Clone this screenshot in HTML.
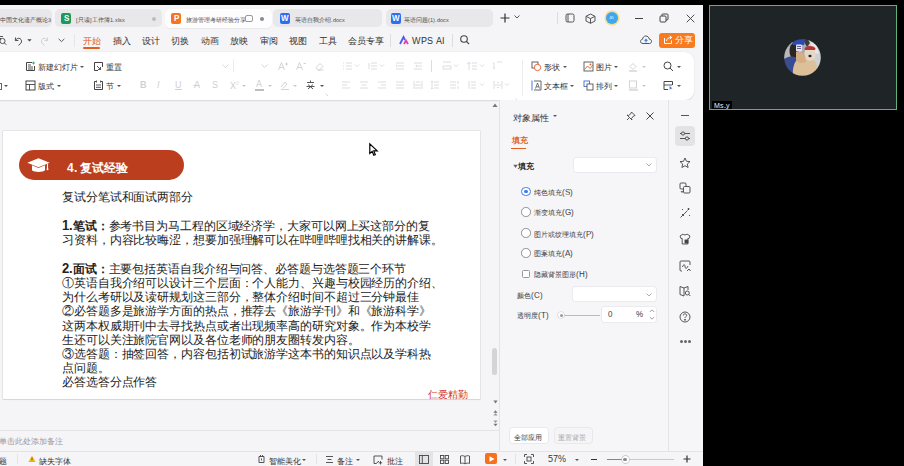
<!DOCTYPE html>
<html><head><meta charset="utf-8">
<style>
@font-face{font-family:"Liberation Sans";src:local("Liberation Sans"),local("LiberationSans");unicode-range:U+0000-1FFF;}
@font-face{font-family:"Liberation Sans";src:local("Liberation Sans"),local("LiberationSans");size-adjust:133%;unicode-range:U+2000-FFFF;}
@font-face{font-family:"Liberation Sans";font-weight:bold;src:local("Liberation Sans Bold"),local("LiberationSans-Bold");unicode-range:U+0000-1FFF;}
@font-face{font-family:"Liberation Sans";font-style:italic;src:local("Liberation Sans Italic"),local("LiberationSans-Italic");unicode-range:U+0000-1FFF;}
@font-face{font-family:"Liberation Sans";font-weight:bold;src:local("Liberation Sans Bold"),local("LiberationSans-Bold");size-adjust:133%;unicode-range:U+2000-FFFF;}
html,body{margin:0;padding:0}
body{width:904px;height:466px;background:#000;position:relative;overflow:hidden;font-family:"Liberation Sans",sans-serif;color:#333}
.a{position:absolute}
.app{left:0;top:5px;width:703px;height:461px;background:#f5f4f7;overflow:hidden}
.t{white-space:nowrap;line-height:1}
svg{position:absolute;overflow:visible}
.tab{position:absolute;top:3.7px;height:18.8px;background:#e8e7ea;border-radius:5px}
.tab .ic{position:absolute;left:6px;top:4px;width:10px;height:11px;border-radius:2px;color:#fff;font:bold 8px/11px "Liberation Sans";text-align:center}
.tab .tx{position:absolute;left:21px;top:8px;font-size:5.5px;color:#4a4a4e;white-space:nowrap;line-height:7px}
.rb{position:absolute;font-size:7.6px;color:#333;white-space:nowrap;line-height:9px}
.car{position:absolute;width:0;height:0;border-left:2px solid transparent;border-right:2px solid transparent;border-top:2.2px solid #555}
.carl{border-top-color:#c9c9cc}
.pn{position:absolute;font-size:7.4px;color:#3c3c3c;white-space:nowrap;line-height:9px}
.rad{position:absolute;width:9.5px;height:9.5px;margin:-0.75px 0 0 -0.75px;border:0.9px solid #8e8e92;border-radius:50%;background:#fff;box-sizing:border-box}
.sb{position:absolute;font-size:8px;color:#333;white-space:nowrap;line-height:9px}
.L{font-size:1.1em}
.menu{position:absolute;top:31px;font-size:8.6px;color:#333;white-space:nowrap;line-height:10px}
</style></head><body>
<div class="a app">
  <!-- tabs row -->
  <div class="a" style="left:0;top:0;width:703px;height:47px;background:#f5f4f7"></div>
  <div class="tab" style="left:-10px;width:62px"><div class="tx" style="left:10px">中国文化遗产概论3</div></div>
  <div class="tab" style="left:55px;width:107px"><div class="ic" style="background:#1c9a5b">S</div><div class="tx">[只读]工作簿1.xlsx</div><div class="a" style="left:97px;top:8px;width:4px;height:4px;border-radius:2px;background:#bdbdc0"></div></div>
  <div class="tab" style="left:165px;width:107px;background:#fdfdfe;height:19.5px;box-shadow:0 0.5px 1px rgba(0,0,0,.05)"><div class="ic" style="background:#f5761f">P</div><div class="tx">旅游管理考研经验分享...</div>
    <div class="a" style="left:80px;top:6px;width:6px;height:5px;border:0.8px solid #999;border-radius:2px"></div>
    <div class="a" style="left:95px;top:8px;width:4px;height:4px;border-radius:2px;background:#8a8a8e"></div></div>
  <div class="tab" style="left:273px;width:109px"><div class="ic" style="background:#2d6ff2;left:7px">W</div><div class="tx" style="left:22px">英语自我介绍.docx</div></div>
  <div class="tab" style="left:386px;width:107px"><div class="ic" style="background:#2d6ff2;left:5px">W</div><div class="tx" style="left:18px">英语问题(1).docx</div></div>
  <svg style="left:499.5px;top:8px" width="10" height="10"><path d="M5 0.5V9.5M0.5 5H9.5" stroke="#333" stroke-width="1.2"/></svg>
  <svg style="left:514px;top:10px" width="6" height="4"><path d="M0.5 0.5L3 3L5.5 0.5" fill="none" stroke="#555" stroke-width="1"/></svg>
  <!-- toolbar row -->
  

  <!-- toolbar row content -->
  <svg style="left:-2px;top:30px" width="10" height="11" fill="none" stroke="#444" stroke-width="0.9"><path d="M0 1.5H5M0 3.5H3"/><circle cx="4.5" cy="6" r="2.6"/><path d="M6.4 7.9L8.3 9.8"/></svg>
  <svg style="left:14px;top:30.5px" width="9" height="10" fill="none" stroke="#444" stroke-width="0.95"><path d="M1.5 1.5L1.3 4.6L4.4 4.4"/><path d="M1.5 4.3C2.6 2.4 4.5 1.8 6 2.6C7.8 3.6 8 5.8 6.8 7.3L4.5 9.4"/></svg>
  <svg style="left:26.5px;top:34.3px" width="5" height="3"><path d="M0.3 0.3H4.7L2.5 2.6Z" fill="#444"/></svg>
  <svg style="left:40px;top:30.5px" width="9" height="10" fill="none" stroke="#cfcfd2" stroke-width="0.95"><path d="M7.5 1.5L7.7 4.6L4.6 4.4"/><path d="M7.5 4.3C6.4 2.4 4.5 1.8 3 2.6C1.2 3.6 1 5.8 2.2 7.3L4.5 9.4"/></svg>
  <svg style="left:57.5px;top:33px" width="7" height="5"><path d="M0.6 0.8L3.5 3.6L6.4 0.8" fill="none" stroke="#555" stroke-width="0.95"/></svg>
  <div class="a" style="left:74px;top:29px;width:1px;height:13px;background:#e6e6e9"></div>
  <div class="menu" style="left:83px;color:#e0601c">开始</div>
  <div class="a" style="left:83px;top:42px;width:17px;height:2px;background:#e0601c;border-radius:1px"></div>
  <div class="menu" style="left:112.5px">插入</div>
  <div class="menu" style="left:142px">设计</div>
  <div class="menu" style="left:171px">切换</div>
  <div class="menu" style="left:200.5px">动画</div>
  <div class="menu" style="left:230px">放映</div>
  <div class="menu" style="left:259.5px">审阅</div>
  <div class="menu" style="left:289px">视图</div>
  <div class="menu" style="left:318.5px">工具</div>
  <div class="menu" style="left:348px">会员专享</div>
  <div class="a" style="left:390px;top:29px;width:1px;height:13px;background:#dddde0"></div>
  <svg style="left:399px;top:31px" width="10" height="9"><path d="M1 8L4.5 1L6 4" fill="none" stroke="#4a5cf0" stroke-width="1.8"/><path d="M5 8L7 4.5L9 8" fill="none" stroke="#e8409a" stroke-width="1.8"/></svg>
  <div class="a t" style="left:412px;top:31.5px;font-size:9px;color:#333">WPS AI</div>
  <div class="a" style="left:452px;top:29px;width:1px;height:13px;background:#dddde0"></div>
  <svg style="left:460px;top:30px" width="10" height="10"><circle cx="4" cy="4" r="3.3" fill="none" stroke="#444" stroke-width="1.1"/><path d="M6.4 6.4L9 9" stroke="#444" stroke-width="1.1"/></svg>
  <!-- right window controls -->
  <div class="a" style="left:557px;top:7px;width:1px;height:12px;background:#dddde0"></div>
  <svg style="left:565px;top:8px" width="10" height="10"><rect x="1" y="1" width="8" height="8" rx="1.5" fill="none" stroke="#555" stroke-width="1"/><path d="M3 1v8" stroke="#555" stroke-width="1"/></svg>
  <svg style="left:585px;top:8px" width="11" height="11"><path d="M5.5 1L10 3.3V8L5.5 10.3L1 8V3.3Z M1 3.3L5.5 5.6L10 3.3 M5.5 5.6V10.3" fill="none" stroke="#555" stroke-width="1"/></svg>
  <div class="a" style="left:606px;top:7px;width:12px;height:12px;border-radius:7px;background:#3ea7f0;box-shadow:0 0 0 1.5px #f6dc8c"><div class="a t" style="left:2.5px;top:3.5px;font-size:4.5px;color:#fff">Jn</div></div>
  <div class="a" style="left:635px;top:12.5px;width:8px;height:1.2px;background:#444"></div>
  <svg style="left:659px;top:8px" width="10" height="10"><rect x="1" y="3" width="6" height="6" rx="1" fill="none" stroke="#444" stroke-width="1"/><path d="M3 3V1.5C3 1 3.3 1 3.8 1H8C8.5 1 9 1.3 9 1.8V6C9 6.6 8.7 7 8 7H7" fill="none" stroke="#444" stroke-width="1"/></svg>
  <svg style="left:685.5px;top:8.5px" width="9" height="9"><path d="M0.7 0.7L8.3 8.3M8.3 0.7L0.7 8.3" stroke="#444" stroke-width="0.95"/></svg>
  <svg style="left:640px;top:30px" width="12" height="10"><path d="M3 8.5H9.5C11 8.5 11.5 7.3 11.5 6.3C11.5 5 10.5 4.2 9.3 4.2C9 2.3 7.6 1 5.8 1C4 1 2.7 2.4 2.6 4.2C1.3 4.4 0.5 5.3 0.5 6.4C0.5 7.6 1.5 8.5 3 8.5Z" fill="none" stroke="#555" stroke-width="1"/><path d="M6 7.5V4.5M4.6 5.8L6 4.4L7.4 5.8" fill="none" stroke="#3b82f6" stroke-width="1.1"/></svg>
  <div class="a" style="left:659px;top:27.5px;width:36px;height:15px;background:#fa7a1e;border-radius:3px"></div>
  <svg style="left:663px;top:30px" width="10" height="10"><path d="M8.5 5.5V8.5H1.5V3" fill="none" stroke="#fff" stroke-width="1"/><path d="M3.5 6C3.8 3.5 5.5 2.5 8.5 2.5M6.8 0.8L8.7 2.5L6.8 4.2" fill="none" stroke="#fff" stroke-width="1"/></svg>
  <div class="a t" style="left:675px;top:30px;font-size:8.5px;color:#fff;line-height:10px">分享</div>

  <!-- ribbon -->
  <div class="a" style="left:-12px;top:47px;width:706px;height:48px;background:#fff;border-radius:0 9px 9px 0;box-shadow:0 0.5px 1.5px rgba(0,0,0,.12)"></div>
  <div class="a" style="left:-3px;top:77.5px;width:5px;height:7px;border:1px solid #666;border-left:none;box-sizing:border-box"></div><div class="car" style="left:4px;top:80px"></div>
  <!-- 新建幻灯片 -->
  <svg style="left:25px;top:56px" width="11" height="11"><path d="M7 1.5H1.5V9.5H9.5V5" fill="none" stroke="#444" stroke-width="1"/><path d="M3 4h3M3 6h5M3 8h5" stroke="#444" stroke-width="0.9"/><path d="M8.5 0.5v3M7 2h3" stroke="#2aa865" stroke-width="0.9"/></svg>
  <div class="rb" style="left:38px;top:58.3px">新建幻灯片</div>
  <div class="car" style="left:80px;top:61px"></div>
  <svg style="left:92.5px;top:56px" width="11" height="11"><path d="M9.5 6V1.5H1.5V9.5H5" fill="none" stroke="#444" stroke-width="1"/><path d="M4 5L7.5 8.5M7.5 8.5V6M7.5 8.5H5" fill="none" stroke="#444" stroke-width="0.9"/></svg>
  <div class="rb" style="left:105.5px;top:58.3px">重置</div>
  <svg style="left:25px;top:75px" width="11" height="11"><rect x="1" y="1" width="9" height="9" fill="none" stroke="#444" stroke-width="1"/><path d="M1 4.5h9M4.5 4.5v5.5" stroke="#444" stroke-width="0.9"/></svg>
  <div class="rb" style="left:38px;top:77px">版式</div>
  <div class="car" style="left:57px;top:80px"></div>
  <svg style="left:93px;top:75px" width="11" height="11"><path d="M3 1.5H1.5V9.5H9.5V1.5H8" fill="none" stroke="#444" stroke-width="1"/><path d="M3.5 0.5v2M7.5 0.5v2M3 5h5M3 7.3h5" stroke="#444" stroke-width="0.9"/></svg>
  <div class="rb" style="left:105.5px;top:77px">节</div>
  <div class="car" style="left:117px;top:80px"></div>
  <!-- disabled font group -->
  <svg style="left:222px;top:59px" width="7" height="5"><path d="M0.5 0.5L3.5 3.5L6.5 0.5" fill="none" stroke="#d3d3d6" stroke-width="0.9"/></svg>
  <div class="a" style="left:232.5px;top:54px;width:1px;height:13px;background:#ececee"></div>
  <svg style="left:261px;top:59px" width="7" height="5"><path d="M0.5 0.5L3.5 3.5L6.5 0.5" fill="none" stroke="#d3d3d6" stroke-width="0.9"/></svg>
  <svg style="left:278px;top:56px" width="11" height="10"><path d="M0.5 9L3.5 1.5L6.5 9M1.7 6.5H5.3M7 3h3M8.5 1.5v3" fill="none" stroke="#cfcfd2" stroke-width="0.9"/></svg>
  <svg style="left:296px;top:56px" width="11" height="10"><path d="M0.5 9L3.5 1.5L6.5 9M1.7 6.5H5.3M7.5 2.5h2.5" fill="none" stroke="#cfcfd2" stroke-width="0.9"/></svg>
  <svg style="left:314px;top:56px" width="11" height="11"><path d="M4 9H9.5M2 6.5L6 2.5L9 5.5L5.5 9H4Z" fill="none" stroke="#cfcfd2" stroke-width="0.9"/></svg>
  <!-- row2 font -->
  <div class="a t" style="left:140px;top:76px;font-size:9px;color:#cfcfd2;font-weight:bold">B</div>
  <div class="a t" style="left:157px;top:76px;font-size:9px;color:#cfcfd2;font-style:italic">I</div>
  <div class="a t" style="left:175px;top:76px;font-size:9px;color:#cfcfd2;text-decoration:underline">U</div>
  <div class="a t" style="left:193.5px;top:76px;font-size:9px;color:#cfcfd2;text-decoration:line-through">A</div>
  <div class="a t" style="left:211.5px;top:76px;font-size:9px;color:#cfcfd2">S</div>
  <div class="a t" style="left:229.5px;top:76px;font-size:9px;color:#cfcfd2">X<sup style="font-size:5px">2</sup></div>
  <div class="car carl" style="left:242px;top:80px"></div>
  <div class="a t" style="left:256px;top:75px;font-size:8.5px;color:#cfcfd2">A</div>
  <div class="a" style="left:255px;top:84px;width:9px;height:1.5px;background:#bdbdc0"></div>
  <div class="car carl" style="left:267.5px;top:80px"></div>
  <svg style="left:280px;top:75px" width="10" height="10"><path d="M1 7L5 2L7 4L3 8.5M1 9.5h8" fill="none" stroke="#cfcfd2" stroke-width="0.9"/></svg>
  <div class="car carl" style="left:293px;top:80px"></div>
  <svg style="left:305px;top:75px" width="11" height="11"><path d="M5.5 0.5v2M2 2.5h7M3 4.5L8 9M8 4.5L3 9M1.5 6.5h8" fill="none" stroke="#444" stroke-width="0.9"/></svg>
  <div class="car" style="left:319.5px;top:80px"></div>
  <svg style="left:325px;top:88px" width="4" height="4"><path d="M0.5 0.5L3 3" stroke="#ccc" stroke-width="0.8"/></svg>
  <!-- paragraph group (disabled) -->
  <svg style="left:342px;top:57.3px" width="200" height="30" fill="none" stroke="#d9d9dc" stroke-width="0.9">
    <path d="M1 1h1M4 1h6M1 4h1M4 4h6M1 7h1M4 7h6"/><path d="M13 2.5l2 2l2-2"/>
    <path d="M27 1v6M29 1h6M29 4h6M29 7h6"/><path d="M38 2.5l2 2l2-2"/>
    <path d="M54 1h8M56 4h6M54 7h8M54 3l1.3 1L54 5"/>
    <path d="M72 1h8M74 4h6M72 7h8M75 3l-1.3 1L75 5"/>
    <path d="M89.5 -2v12"/>
    <path d="M101 0h8M101 4h8M101 7h8M101 4v3M109 4v3"/><path d="M112 2.5l2 2l2-2"/>
    <path d="M127 0v8M125 2l2-2l2 2M130 1h5M130 4h5M130 7h5"/><path d="M138 2.5l2 2l2-2"/>
    <path d="M152 1v6M152 1h-1M155 0h5M153 7l-1.5-1.5"/>
  </svg>
  <svg style="left:342px;top:76px" width="200" height="12" fill="none" stroke="#d9d9dc" stroke-width="0.9">
    <path d="M0 1h8M0 4h5M0 7h8"/>
    <path d="M18 1h8M19.5 4h5M18 7h8"/>
    <path d="M36 1h8M39 4h5M36 7h8"/>
    <path d="M54 1h8M54 4h8M54 7h8"/>
    <path d="M72 0v8M80 0v8M73 4h6M73 7h6M74 1h4"/>
    <path d="M90 0v8M89 1l1-1l1 1M89 7l1 1l1-1M92 1h5M92 4h5M92 7h5"/>
    <path d="M108 1h6M108 4h6M108 7h6M116 0v3M116 5v3"/>
    <path d="M127 0v8M129 1h5M129 4h5M129 7h5"/><path d="M138 2.5l2 2l2-2"/>
    <path d="M152 0v8M160 0v8M153 4h6M155 2l1-1l1 1M155 6l1 1l1-1"/><path d="M163 2.5l2 2l2-2"/>
  </svg>
  <svg style="left:515px;top:93px" width="4" height="4"><path d="M0.5 0.5L3 3" stroke="#ccc" stroke-width="0.8"/></svg>
  <div class="a" style="left:522px;top:55px;width:1px;height:36px;background:#ececee"></div>
  <!-- right drawing group -->
  <svg style="left:531px;top:56px" width="11" height="11"><rect x="1" y="1" width="6" height="6" fill="none" stroke="#555" stroke-width="0.9"/><circle cx="6.5" cy="6.5" r="3.2" fill="#fff" stroke="#e05a2a" stroke-width="0.9"/></svg>
  <div class="rb" style="left:544px;top:58.3px">形状</div>
  <div class="car" style="left:562.5px;top:61px"></div>
  <svg style="left:583px;top:56px" width="11" height="11"><rect x="1" y="1" width="9" height="9" fill="none" stroke="#555" stroke-width="0.9"/><path d="M1.5 8.5L4.5 5L7 7.5L10 4" fill="none" stroke="#e05a2a" stroke-width="0.9"/><circle cx="7.5" cy="3.5" r="0.9" fill="#e05a2a"/></svg>
  <div class="rb" style="left:596px;top:58.3px">图片</div>
  <div class="car" style="left:614px;top:61px"></div>
  <svg style="left:628px;top:56px" width="11" height="11"><path d="M2 5.5L5 2.5L8 5.5L5 8.5Z" fill="none" stroke="#cfcfd2" stroke-width="0.9"/><path d="M1 10h8" stroke="#cfcfd2" stroke-width="1.3"/></svg>
  <div class="car carl" style="left:641.5px;top:61px"></div>
  <svg style="left:663px;top:56px" width="11" height="11"><circle cx="4.5" cy="4.5" r="3.5" fill="none" stroke="#444" stroke-width="1"/><path d="M7 7L10 10" stroke="#444" stroke-width="1"/></svg>
  <div class="car" style="left:677px;top:61px"></div>
  <svg style="left:531px;top:75px" width="11" height="11"><path d="M1 0.5v10" stroke="#3d6bd8" stroke-width="0.9"/><path d="M3 1H10V10H3" fill="none" stroke="#555" stroke-width="0.9"/><path d="M4.5 8.5L6.5 3L8.5 8.5M5.2 6.8h2.6" fill="none" stroke="#555" stroke-width="0.8"/></svg>
  <div class="rb" style="left:544px;top:77px">文本框</div>
  <div class="car" style="left:570px;top:80px"></div>
  <svg style="left:583px;top:75px" width="11" height="11"><rect x="1" y="1" width="5.5" height="5.5" fill="none" stroke="#3d6bd8" stroke-width="0.9"/><rect x="4" y="4" width="6" height="6" fill="#fff" stroke="#555" stroke-width="0.9"/></svg>
  <div class="rb" style="left:596px;top:77px">排列</div>
  <div class="car" style="left:614px;top:80px"></div>
  <svg style="left:628px;top:75px" width="11" height="11"><rect x="1.5" y="1" width="7" height="7" fill="none" stroke="#cfcfd2" stroke-width="0.9"/><path d="M1 10h9" stroke="#cfcfd2" stroke-width="1.3"/></svg>
  <div class="car carl" style="left:641.5px;top:80px"></div>
  <svg style="left:663px;top:75px" width="11" height="11"><path d="M5 9.5H1V1.5H9.5V5" fill="none" stroke="#444" stroke-width="1"/><path d="M1 5h8" stroke="#444" stroke-width="0.9"/><path d="M6.5 6L9.5 8.5L7.5 8.8L6.8 10.5Z" fill="#3d6bd8"/></svg>
  <div class="car" style="left:677px;top:80px"></div>

  <!-- main area -->
  <div class="a" style="left:3px;top:126px;width:477px;height:268px;background:#fff;box-shadow:0 0 0 0.5px rgba(0,0,0,.12),0 1px 1px rgba(0,0,0,.06)"></div>
  <div class="a" style="left:18.5px;top:145.3px;width:165.5px;height:30px;background:#bb3f1f;border-radius:15px"></div>
  <svg style="left:27px;top:152.5px" width="23" height="16"><path d="M11.5 0.3L22.7 4.8L11.5 9.3L0.3 4.8Z" fill="#fff"/><path d="M5 7.3V12.3C7 14.6 16 14.6 18 12.3V7.3L11.5 10Z" fill="#fff"/><path d="M20.5 5.8V11" stroke="#fff" stroke-width="1.1"/><circle cx="20.5" cy="11.3" r="1" fill="#fff"/></svg>
  <div class="a t" style="left:66.5px;top:156.5px;font-size:12px;color:#fff;font-weight:bold;font-family:'Liberation Sans',sans-serif">4. 复试经验</div>
  <div class="a" style="left:62px;top:185.4px;font-size:11.8px;letter-spacing:-0.1px;line-height:14.23px;color:#222;white-space:nowrap;font-family:'Liberation Sans',sans-serif">
复试分笔试和面试两部分<br><br>
<b style="font-family:'Liberation Sans',sans-serif"><span style="font-size:1.12em">1.</span>笔试：</b>参考书目为马工程的区域经济学，大家可以网上买这部分的复<br>
习资料，内容比较晦涩，想要加强理解可以在哔哩哔哩找相关的讲解课。<br><br>
<b style="font-family:'Liberation Sans',sans-serif"><span style="font-size:1.12em">2.</span>面试：</b>主要包括英语自我介绍与问答、必答题与选答题三个环节<br>
①英语自我介绍可以设计三个层面：个人能力、兴趣与校园经历的介绍、<br>
为什么考研以及读研规划这三部分，整体介绍时间不超过三分钟最佳<br>
②必答题多是旅游学方面的热点，推荐去《旅游学刊》和《旅游科学》<br>
这两本权威期刊中去寻找热点或者出现频率高的研究对象。作为本校学<br>
生还可以关注旅院官网以及各位老师的朋友圈转发内容。<br>
③选答题：抽签回答，内容包括初试旅游学这本书的知识点以及学科热<br>
点问题。<br>
必答选答分点作答</div>
  <div class="a t" style="left:427.5px;top:384.9px;font-size:9.8px;color:#c8342a">仁爱精勤</div>
  <!-- scrollbar -->
  <svg style="left:492px;top:98px" width="6" height="5"><path d="M3 0.5L5.5 4H0.5Z" fill="#777"/></svg>
  <div class="a" style="left:492px;top:343px;width:4.5px;height:27px;background:#d4d4d7;border-radius:2.5px"></div>
  <svg style="left:492.5px;top:395px" width="5" height="4"><path d="M2.5 3.5L4.6 0.5H0.4Z" fill="#777"/></svg>
  <svg style="left:492.5px;top:404.5px" width="5" height="7"><path d="M2.5 0.3L4.6 2.8H0.4Z" fill="#777"/><path d="M2.5 3L4.6 5.5H0.4Z" fill="#999"/></svg>
  <svg style="left:492.5px;top:414.5px" width="5" height="7"><path d="M2.5 3L4.6 0.5H0.4Z" fill="#999"/><path d="M2.5 6.2L4.6 3.7H0.4Z" fill="#777"/></svg>
  <!-- notes -->
  <div class="a" style="left:0;top:425px;width:499px;height:1px;background:#e4e3e7"></div>
  <div class="a t" style="left:-1px;top:431.5px;font-size:8.4px;color:#9a9a9e">单击此处添加备注</div>

  <!-- property panel -->
  <div class="a" style="left:499px;top:95px;width:169px;height:351px;background:#f6f5f8;border-left:1px solid #e3e2e6;box-sizing:border-box"></div>
  <div class="a" style="left:668px;top:95px;width:35px;height:351px;background:#f6f5f8;border-left:1px solid #e3e2e6;box-sizing:border-box"></div>
  <div class="a t" style="left:512.5px;top:108.9px;font-size:8.9px;color:#333">对象属性</div>
  <div class="car" style="left:553px;top:110px"></div>
  <svg style="left:626px;top:106px" width="10" height="10"><path d="M5.5 1L9 4.5L7.5 5L5.5 7.5L6 9L1 4L2.5 4.5L5 2.5Z M3 7L1 9" fill="none" stroke="#444" stroke-width="0.9"/></svg>
  <svg style="left:645.5px;top:107px" width="8" height="8"><path d="M0.5 0.5L7.5 7.5M7.5 0.5L0.5 7.5" stroke="#444" stroke-width="1"/></svg>
  <div class="a t" style="left:511.5px;top:132.4px;font-size:7.6px;color:#e0601c;font-weight:bold">填充</div>
  <div class="a" style="left:511.3px;top:142.8px;width:14.7px;height:1.6px;background:#e0601c"></div>
  <svg style="left:512.5px;top:159px" width="5" height="5"><path d="M0.3 0.8H4.7L2.5 4Z" fill="#666"/></svg>
  <div class="a t" style="left:518px;top:157.9px;font-size:7.6px;color:#222;font-weight:bold;font-family:'Liberation Sans',sans-serif">填充</div>
  <div class="a" style="left:574px;top:152.5px;width:82px;height:14.5px;background:#fff;border-radius:2px;box-shadow:0 0 0 0.5px #e0e0e3"></div>
  <svg style="left:646px;top:157.5px" width="6" height="4"><path d="M0.5 0.5L3 3L5.5 0.5" fill="none" stroke="#999" stroke-width="0.8"/></svg>
  <div class="rad" style="left:521.8px;top:182.6px;border-color:#3a7cf0"><div class="a" style="left:2.1px;top:2.1px;width:3.5px;height:3.5px;border-radius:50%;background:#3a7cf0"></div></div>
  <div class="pn" style="left:533.5px;top:183.1px">纯色填充<span class="L">(S)</span></div>
  <div class="rad" style="left:521.8px;top:203.2px"></div>
  <div class="pn" style="left:533.5px;top:203.4px">渐变填充<span class="L">(G)</span></div>
  <div class="rad" style="left:521.8px;top:223.8px"></div>
  <div class="pn" style="left:533.5px;top:224.6px">图片或纹理填充<span class="L">(P)</span></div>
  <div class="rad" style="left:521.8px;top:244px"></div>
  <div class="pn" style="left:533.5px;top:244px">图案填充<span class="L">(A)</span></div>
  <div class="a" style="left:522px;top:264.5px;width:8px;height:8px;border:1px solid #9a9a9e;border-radius:1.5px;background:#fff;box-sizing:border-box"></div>
  <div class="pn" style="left:533.5px;top:265.4px">隐藏背景图形<span class="L">(H)</span></div>
  <div class="pn" style="left:517px;top:285.6px">颜色<span class="L">(C)</span></div>
  <div class="a" style="left:573px;top:281.8px;width:83px;height:14.7px;background:#fff;border-radius:2px;box-shadow:0 0 0 0.5px #e0e0e3"></div>
  <svg style="left:646px;top:287.5px" width="6" height="4"><path d="M0.5 0.5L3 3L5.5 0.5" fill="none" stroke="#999" stroke-width="0.8"/></svg>
  <div class="pn" style="left:517px;top:306px">透明度<span class="L">(T)</span></div>
  <div class="a" style="left:558px;top:307px;width:6px;height:6px;border-radius:50%;background:#fff;box-shadow:0 0 0 0.6px #ccc"></div>
  <div class="a" style="left:559.5px;top:308.5px;width:3px;height:3px;border-radius:50%;background:#999"></div>
  <div class="a" style="left:564px;top:309.6px;width:35.6px;height:0.8px;background:#bbb"></div>
  <div class="a" style="left:602px;top:302.4px;width:54px;height:14.6px;background:#fff;border-radius:2px;box-shadow:0 0 0 0.5px #e0e0e3"></div>
  <div class="a t" style="left:608px;top:306px;font-size:8px;color:#444">0</div>
  <div class="a t" style="left:636px;top:306px;font-size:8px;color:#444">%</div>
  <svg style="left:648.5px;top:304px" width="6" height="11"><path d="M0.8 3L3 0.8L5.2 3M0.8 8L3 10.2L5.2 8" fill="none" stroke="#888" stroke-width="0.8"/></svg>
  <div class="a" style="left:509.5px;top:423.3px;width:38.5px;height:14.6px;background:#fff;border-radius:2px;box-shadow:0 0 0 0.5px #dcdcdf"></div>
  <div class="pn" style="left:513.5px;top:427.5px">全部应用</div>
  <div class="a" style="left:554.5px;top:423.3px;width:37.5px;height:14.6px;background:#f5f4f7;border-radius:2px;box-shadow:0 0 0 0.5px #dcdcdf"></div>
  <div class="pn" style="left:558px;top:427.5px;color:#aaa">重置背景</div>
  <!-- icon bar -->
  <div class="a" style="left:680.5px;top:110px;width:8px;height:1px;background:#555"></div>
  <div class="a" style="left:675px;top:121px;width:20px;height:20px;background:#e3e3e6;border-radius:4px"></div>
  <svg style="left:679px;top:125px" width="12" height="12" fill="none" stroke="#444" stroke-width="0.9"><path d="M1 3.5H11M1 8.5H11"/><circle cx="4" cy="3.5" r="1.6" fill="#e3e3e6"/><circle cx="8" cy="8.5" r="1.6" fill="#e3e3e6"/></svg>
  <svg style="left:679px;top:151.5px" width="12" height="12" fill="none" stroke="#444" stroke-width="0.9"><path d="M6 1L7.5 4.3L11 4.6L8.3 7L9.1 10.5L6 8.7L2.9 10.5L3.7 7L1 4.6L4.5 4.3Z"/></svg>
  <svg style="left:679px;top:176.5px" width="12" height="12" fill="none" stroke="#444" stroke-width="0.9"><rect x="1" y="1" width="6" height="6" rx="1"/><rect x="4.5" y="4.5" width="6.5" height="6.5" rx="1" fill="#f5f4f7"/><path d="M2 9L3 10.5L4 9"/></svg>
  <svg style="left:679px;top:201.5px" width="12" height="12" fill="none" stroke="#444" stroke-width="0.9"><path d="M1.5 10.5L8.5 3.5M3 7L5 9M9.5 1v2M8.5 2h2M3 2L4 3M10 8L11 9"/></svg>
  <svg style="left:679px;top:228px" width="12" height="12" fill="none" stroke="#444" stroke-width="0.9"><path d="M4 1L1 3L2 5.5H3.2V11H8.8V5.5H10L11 3L8 1C7.5 2.2 4.5 2.2 4 1Z"/><rect x="6" y="7" width="3" height="3" fill="#444"/></svg>
  <svg style="left:679px;top:254.5px" width="12" height="12" fill="none" stroke="#444" stroke-width="0.9"><path d="M3 11H2C1.4 11 1 10.6 1 10V2C1 1.4 1.4 1 2 1H10C10.6 1 11 1.4 11 2V5"/><path d="M3.5 7C4.5 4 6 4 6 6.5C6 9 8 9 9 6M8 11L10 9L11.5 11"/></svg>
  <svg style="left:679px;top:279.5px" width="12" height="12" fill="none" stroke="#444" stroke-width="0.9"><path d="M1 1.5L5 3V11L1 9.5Z M5 3L9 1.5V5"/><circle cx="8.3" cy="8" r="2"/><path d="M9.8 9.5L11.3 11"/></svg>
  <svg style="left:679px;top:305.5px" width="12" height="12" fill="none" stroke="#444" stroke-width="0.9"><circle cx="6" cy="6" r="5"/><path d="M4.3 4.5C4.3 3.4 5 2.9 6 2.9C7 2.9 7.7 3.5 7.7 4.4C7.7 5.5 6 5.6 6 7"/><circle cx="6" cy="8.8" r="0.5" fill="#444"/></svg>
  <div class="a" style="left:679.5px;top:335px;width:3px;height:3px;border-radius:50%;background:#666"></div>
  <div class="a" style="left:683.5px;top:335px;width:3px;height:3px;border-radius:50%;background:#666"></div>
  <div class="a" style="left:687.5px;top:335px;width:3px;height:3px;border-radius:50%;background:#666"></div>
  <!-- status bar -->
  <div class="a" style="left:0;top:446px;width:703px;height:15px;background:#f5f5f7;border-top:1px solid #e3e2e6"></div>
  <div class="sb" style="left:-1px;top:451.8px">题</div>
  <div class="a" style="left:17px;top:449px;width:1px;height:10px;background:#e3e3e6"></div>
  <svg style="left:28px;top:449.5px" width="8" height="8"><path d="M4 0.5L7.6 7H0.4Z" fill="#f5b51a"/><path d="M4 2.8V4.8" stroke="#6b4a00" stroke-width="0.9"/><circle cx="4" cy="5.9" r="0.45" fill="#6b4a00"/></svg>
  <div class="sb" style="left:39px;top:451.8px">缺失字体</div>
  <svg style="left:257px;top:449px" width="9" height="10" fill="none" stroke="#444" stroke-width="0.9"><path d="M2 2.5H7V8.5H2Z M3.5 2.5V1M5.5 2.5V1M4.5 4.5V6.5"/></svg>
  <div class="sb" style="left:268.5px;top:451.8px">智能美化</div>
  <div class="car" style="left:302px;top:453.5px"></div>
  <div class="a" style="left:315.5px;top:449px;width:1px;height:10px;background:#e3e3e6"></div>
  <svg style="left:325px;top:450px" width="9" height="9" fill="none" stroke="#444" stroke-width="0.9"><path d="M1 1.5H8M2.5 4.5H6.5M1 7.5H8"/></svg>
  <div class="sb" style="left:337px;top:451.8px">备注</div>
  <div class="car" style="left:355.5px;top:453.5px"></div>
  <svg style="left:373px;top:449.5px" width="10" height="10" fill="none" stroke="#444" stroke-width="0.9"><path d="M9 4.5V1H1V8.5H3.5L5 6.5H6M7.5 6V9.5M5.8 7.8H9.2"/></svg>
  <div class="sb" style="left:386.5px;top:451.8px">批注</div>
  <div class="a" style="left:414.5px;top:447px;width:18px;height:14px;background:#e4e4e7"></div>
  <svg style="left:418.5px;top:449.5px" width="10" height="9" fill="none" stroke="#444" stroke-width="0.9"><rect x="0.5" y="0.5" width="9" height="8"/><path d="M3.3 0.5V8.5"/></svg>
  <svg style="left:440px;top:449.5px" width="9" height="9" fill="none" stroke="#444" stroke-width="0.9"><rect x="0.5" y="0.5" width="3.3" height="3.3"/><rect x="5.2" y="0.5" width="3.3" height="3.3"/><rect x="0.5" y="5.2" width="3.3" height="3.3"/><rect x="5.2" y="5.2" width="3.3" height="3.3"/></svg>
  <svg style="left:460px;top:449.5px" width="10" height="9" fill="none" stroke="#444" stroke-width="0.9"><path d="M5 1.5C3.5 0.5 1.5 0.5 0.5 1V8.5C1.5 8 3.5 8 5 8.8C6.5 8 8.5 8 9.5 8.5V1C8.5 0.5 6.5 0.5 5 1.5Z M5 1.5V8.8"/></svg>
  <div class="a" style="left:484.6px;top:448px;width:12.4px;height:10.8px;background:#f7711d;border-radius:2px"></div>
  <svg style="left:488.5px;top:450.5px" width="6" height="6"><path d="M0.5 0.3L5.5 3L0.5 5.7Z" fill="#fff"/></svg>
  <div class="car" style="left:503px;top:453.5px"></div>
  <div class="a" style="left:515px;top:449px;width:1px;height:10px;background:#e3e3e6"></div>
  <svg style="left:524px;top:449px" width="10" height="10" fill="none" stroke="#444" stroke-width="0.9"><path d="M0.5 3V0.5H3M7 0.5H9.5V3M9.5 7V9.5H7M3 9.5H0.5V7"/><rect x="3" y="3" width="4" height="4"/></svg>
  <div class="a t" style="left:548px;top:450px;font-size:8.6px;color:#333">57%</div>
  <div class="car" style="left:574.5px;top:453.5px"></div>
  <div class="a" style="left:590.5px;top:453.8px;width:6px;height:1.2px;background:#333"></div>
  <div class="a" style="left:606.7px;top:453.9px;width:67.7px;height:1px;background:#c9c9cc"></div>
  <div class="a" style="left:606.7px;top:453.6px;width:18.3px;height:1.5px;background:#4a8ef5"></div>
  <div class="a" style="left:621.5px;top:450.8px;width:7px;height:7px;border-radius:50%;background:#fff;box-shadow:0 0 0 0.7px #bbb"></div>
  <div class="a" style="left:623.3px;top:452.6px;width:3.5px;height:3.5px;border-radius:50%;background:#888"></div>
  <svg style="left:683px;top:450px" width="8" height="8"><path d="M4 0.5V7.5M0.5 4H7.5" stroke="#333" stroke-width="1.2"/></svg>
</div>
<!-- video tile -->
<div class="a" style="left:709px;top:5px;width:186px;height:103px;background:#1f2427;border:1px solid #5fb274;overflow:hidden">
  <svg style="left:74px;top:33px" width="37" height="37" viewBox="0 0 37 37">
    <defs><clipPath id="cc"><circle cx="18.5" cy="18.5" r="18.3"/></clipPath>
    <filter id="bl"><feGaussianBlur stdDeviation="0.7"/></filter></defs>
    <g clip-path="url(#cc)"><g filter="url(#bl)">
    <rect x="-2" y="-2" width="41" height="41" fill="#a9abad"/>
    <rect x="25" y="-2" width="14" height="41" fill="#cfd0d2"/>
    <rect x="-2" y="8" width="10" height="14" fill="#b9b9ba"/>
    <ellipse cx="10" cy="12" rx="4.5" ry="8" fill="#2a2624"/>
    <path d="M-2 22C2 17 10 16 14 20L15 39H-2Z" fill="#3b4d92"/>
    <path d="M19 1L23 -1L26 4L23 8Z" fill="#3d3a38"/>
    <path d="M26 3L33 6L35 15L30 14Z" fill="#e9e6e3"/>
    <path d="M9 39C8 30 10 22 15 19C20 17 28 18 32 24C34 29 33 35 32 39Z" fill="#dcc09a"/>
    <ellipse cx="26" cy="15" rx="5.8" ry="6.8" fill="#e6d8c6"/>
    <path d="M20.5 9.5C22 6.5 29 6 31.5 9.5L31 11H21Z" fill="#b83238"/>
    <ellipse cx="26" cy="17" rx="1.6" ry="1.3" fill="#2a201c"/>
    <path d="M12 13C14 12 19 13 21 16L22 23C18 25 14 24 12 21Z" fill="#d6ad85"/>
    <path d="M8 1C10 -2 19 -2 21 2L20 6H9Z" fill="#2f48b5"/>
    <rect x="12" y="5.5" width="6" height="7" rx="1" fill="#e3e1ec"/>
    <path d="M13 7.5H17M13 9.5H17" stroke="#5a4d8c" stroke-width="0.9"/>
    </g></g></svg>
  <div class="a" style="left:2px;top:95px;width:20px;height:8px;background:#000"></div>
  <div class="a t" style="left:3.5px;top:96px;font-size:7px;color:#f0f0f0;letter-spacing:0.3px">Ms.y</div>
</div>
<!-- cursor -->
<svg style="left:368.5px;top:142.5px" width="10" height="14"><path d="M0.8 0.8V10.5L3.2 8.4L4.8 12.2L6.3 11.6L4.8 7.9H8.2Z" fill="#fff" stroke="#000" stroke-width="1.2" stroke-linejoin="miter"/></svg>
</body></html>
